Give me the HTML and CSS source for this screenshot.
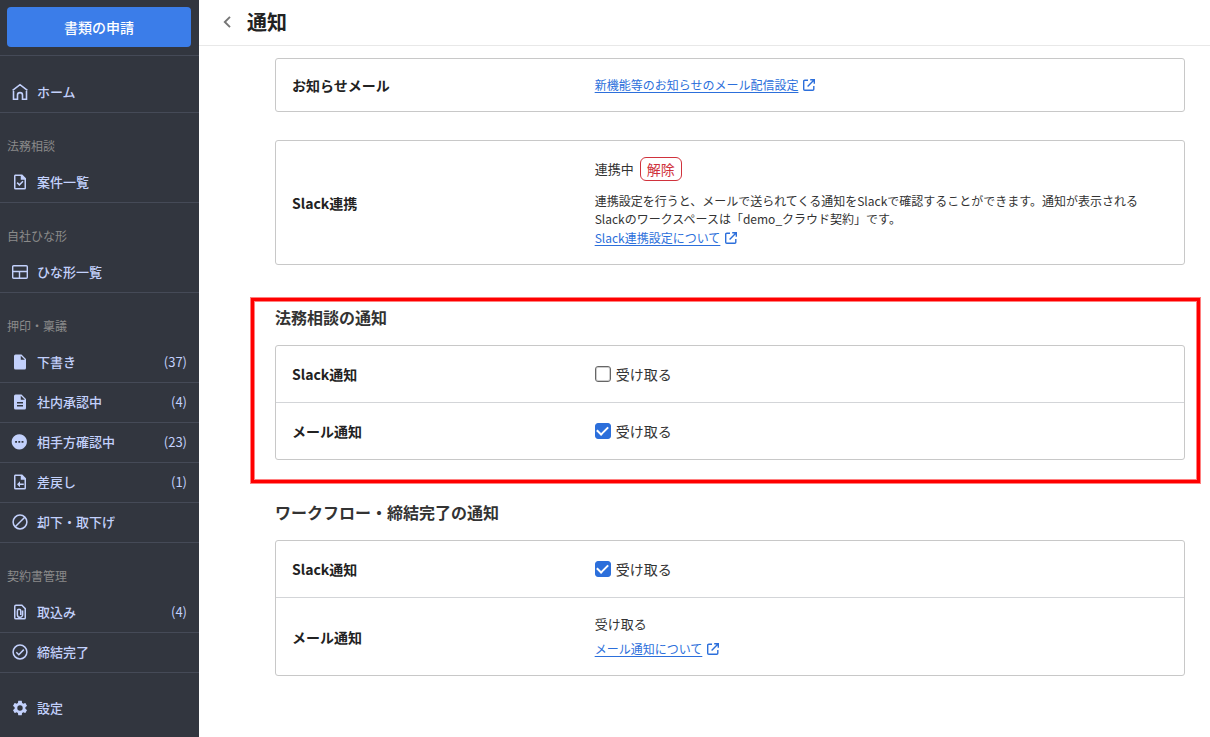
FILE: index.html
```html
<!DOCTYPE html>
<html lang="ja">
<head>
    <meta charset="UTF-8">
    <meta name="viewport" content="width=device-width, initial-scale=1.0">
    <title>通知</title>
    <link rel="stylesheet" href="styles.css">
</head>
<body>
    <svg class="sprite" aria-hidden="true">
        <symbol id="external" viewBox="0 0 12 12">
            <path d="M5 1.2H1.8Q.7 1.2.7 2.3v7.9q0 1.1 1.1 1.1h7.9q1.1 0 1.1-1.1V7M7.2.7h4.1v4.1M11 1 4.6 7.4" fill="none" stroke="currentColor" stroke-width="1.4"/>
        </symbol>
    </svg>

    <nav class="sidebar">
        <div class="sidebar-top">
            <button type="button" class="apply-button">書類の申請</button>
        </div>

        <div class="nav-group nav-home">
            <a href="#" class="nav-item">
                <svg class="nav-icon" viewBox="0 0 18 18"><path d="M1.6 7.4 9 1.7l7.4 5.7M2.5 6.8v9.4h4v-4.1a2.5 2.5 0 0 1 5 0v4.1h4V6.8" fill="none" stroke="currentColor" stroke-width="1.6"/></svg>
                <span>ホーム</span>
            </a>
        </div>

        <div class="nav-group">
            <h2 class="nav-label">法務相談</h2>
            <a href="#" class="nav-item">
                <svg class="nav-icon" viewBox="0 0 24 24"><path fill="currentColor" fill-rule="evenodd" d="M6 2h9l5 5v13a2 2 0 0 1-2 2H6a2 2 0 0 1-2-2V4c0-1.1.9-2 2-2zm0 2v16h12V9h-5V4zM7.5 13.5l1.4-1.4 2.3 2.3 4.1-4.1 1.4 1.4-5.5 5.5z"/></svg>
                <span>案件一覧</span>
            </a>
        </div>

        <div class="nav-group">
            <h2 class="nav-label">自社ひな形</h2>
            <a href="#" class="nav-item">
                <svg class="nav-icon" viewBox="0 0 18 18"><path d="M2.7 2.7h12.6q1 0 1 1v10.6q0 1-1 1H2.7q-1 0-1-1V3.7q0-1 1-1zM1.7 8.5h14.6M8.5 8.5v6.8" fill="none" stroke="currentColor" stroke-width="1.4"/></svg>
                <span>ひな形一覧</span>
            </a>
        </div>

        <div class="nav-group">
            <h2 class="nav-label">押印・稟議</h2>
            <a href="#" class="nav-item">
                <svg class="nav-icon" viewBox="0 0 24 24"><path fill="currentColor" d="M6 2a2 2 0 0 0-2 2v16a2 2 0 0 0 2 2h12a2 2 0 0 0 2-2V8l-6-6H6zm7 7V3.5L18.5 9H13z"/></svg>
                <span>下書き</span>
                <span class="nav-count">(37)</span>
            </a>
            <a href="#" class="nav-item">
                <svg class="nav-icon" viewBox="0 0 24 24"><path fill="currentColor" d="M14 2H6a2 2 0 0 0-2 2v16a2 2 0 0 0 2 2h12a2 2 0 0 0 2-2V8l-6-6zm2 16H8v-2h8v2zm0-4H8v-2h8v2zm-3-5V3.5L18.5 9H13z"/></svg>
                <span>社内承認中</span>
                <span class="nav-count">(4)</span>
            </a>
            <a href="#" class="nav-item">
                <svg class="nav-icon" viewBox="0 0 24 24"><path fill="currentColor" fill-rule="evenodd" d="M11 1.5a10.2 10.2 0 1 0 .1 0zM5.5 10.5h2.5v2.5H5.5zm4.3 0h2.5v2.5H9.8zm4.3 0h2.5v2.5h-2.5z"/></svg>
                <span>相手方確認中</span>
                <span class="nav-count">(23)</span>
            </a>
            <a href="#" class="nav-item">
                <svg class="nav-icon" viewBox="0 0 24 24"><path fill="currentColor" fill-rule="evenodd" d="M6 2h9l5 5v13a2 2 0 0 1-2 2H6a2 2 0 0 1-2-2V4c0-1.1.9-2 2-2zm0 2v16h12V9h-5V4zM8 15l4-4v3h5v2h-5v3z"/></svg>
                <span>差戻し</span>
                <span class="nav-count">(1)</span>
            </a>
            <a href="#" class="nav-item">
                <svg class="nav-icon" viewBox="0 0 18 18"><g fill="none" stroke="currentColor" stroke-width="1.5"><circle cx="9" cy="9" r="6.9"/><path d="M4.2 13.8l9.6-9.6"/></g></svg>
                <span>却下・取下げ</span>
            </a>
        </div>

        <div class="nav-group">
            <h2 class="nav-label">契約書管理</h2>
            <a href="#" class="nav-item">
                <svg class="nav-icon" viewBox="0 0 24 24"><path d="M14.5 3H6.5Q5 3 5 4.5v15Q5 21 6.5 21h11q1.5 0 1.5-1.5V7.5zM15.5 10v5.5a3.5 3.5 0 0 1-7 0V10.5a2 2 0 0 1 4.5 0v5.5" fill="none" stroke="currentColor" stroke-width="2"/></svg>
                <span>取込み</span>
                <span class="nav-count">(4)</span>
            </a>
            <a href="#" class="nav-item">
                <svg class="nav-icon" viewBox="0 0 18 18"><g fill="none" stroke="currentColor" stroke-width="1.5"><circle cx="9" cy="9" r="6.9"/><path d="M5.3 9.3l2.5 2.4 5-5.1"/></g></svg>
                <span>締結完了</span>
            </a>
        </div>

        <div class="nav-group nav-settings">
            <a href="#" class="nav-item">
                <svg class="nav-icon" viewBox="0 0 24 24"><path fill="currentColor" d="M19.14 12.94c.04-.3.06-.61.06-.94 0-.32-.02-.64-.07-.94l2.03-1.58c.18-.14.23-.41.12-.61l-1.92-3.32c-.12-.22-.37-.29-.59-.22l-2.39.96c-.5-.38-1.03-.7-1.62-.94l-.36-2.54c-.04-.24-.24-.41-.48-.41h-3.84c-.24 0-.43.17-.47.41l-.36 2.54c-.59.24-1.13.57-1.62.94l-2.39-.96c-.22-.08-.47 0-.59.22L2.74 8.87c-.12.21-.08.47.12.61l2.03 1.58c-.05.3-.09.63-.09.94s.02.64.07.94l-2.03 1.58c-.18.14-.23.41-.12.61l1.92 3.32c.12.22.37.29.59.22l2.39-.96c.5.38 1.03.7 1.62.94l.36 2.54c.05.24.24.41.48.41h3.84c.24 0 .44-.17.47-.41l.36-2.54c.59-.24 1.13-.56 1.62-.94l2.39.96c.22.08.47 0 .59-.22l1.92-3.32c.12-.22.07-.47-.12-.61l-2.01-1.58zM12 15.6A3.6 3.6 0 1 1 12 8.4a3.6 3.6 0 0 1 0 7.2z"/></svg>
                <span>設定</span>
            </a>
        </div>
    </nav>

    <div class="page">
        <header class="page-header">
            <a href="#" class="back-link" aria-label="戻る">
                <svg viewBox="0 0 8 12"><path d="M7 .8 1.8 6 7 11.2" fill="none" stroke="currentColor" stroke-width="1.9"/></svg>
            </a>
            <h1>通知</h1>
        </header>

        <main>
            <section class="card">
                <div class="row">
                    <h3 class="row-label">お知らせメール</h3>
                    <div class="row-body">
                        <div class="link-line"><a href="#">新機能等のお知らせのメール配信設定</a><svg class="external"><use href="#external"/></svg></div>
                    </div>
                </div>
            </section>

            <section class="card">
                <div class="row">
                    <h3 class="row-label">Slack連携</h3>
                    <div class="row-body">
                        <div class="status">
                            <span>連携中</span>
                            <button type="button" class="release-button">解除</button>
                        </div>
                        <p class="note">連携設定を行うと、メールで送られてくる通知をSlackで確認することができます。通知が表示されるSlackのワークスペースは「demo_クラウド契約」です。</p>
                        <div class="link-line"><a href="#">Slack連携設定について</a><svg class="external"><use href="#external"/></svg></div>
                    </div>
                </div>
            </section>

            <section class="block highlight">
                <h2>法務相談の通知</h2>
                <div class="card">
                    <div class="row">
                        <h3 class="row-label">Slack通知</h3>
                        <div class="row-body">
                            <label class="check"><input type="checkbox">受け取る</label>
                        </div>
                    </div>
                    <div class="row">
                        <h3 class="row-label">メール通知</h3>
                        <div class="row-body">
                            <label class="check"><input type="checkbox" checked>受け取る</label>
                        </div>
                    </div>
                </div>
            </section>

            <section class="block">
                <h2>ワークフロー・締結完了の通知</h2>
                <div class="card">
                    <div class="row">
                        <h3 class="row-label">Slack通知</h3>
                        <div class="row-body">
                            <label class="check"><input type="checkbox" checked>受け取る</label>
                        </div>
                    </div>
                    <div class="row">
                        <h3 class="row-label">メール通知</h3>
                        <div class="row-body">
                            <p class="receive">受け取る</p>
                            <div class="link-line"><a href="#">メール通知について</a><svg class="external"><use href="#external"/></svg></div>
                        </div>
                    </div>
                </div>
            </section>
        </main>
    </div>
</body>
</html>
```
FILE: styles.css
```css
* {
    box-sizing: border-box;
}

body {
    margin: 0;
    display: flex;
    min-height: 100vh;
    font-family: "Noto Sans CJK JP", sans-serif;
    font-size: 13px;
    line-height: 20px;
    color: #333;
    background: #fff;
}

h1, h2, h3, p {
    margin: 0;
}

button {
    font-family: inherit;
    cursor: pointer;
}

.sprite {
    display: none;
}

/* sidebar */
.sidebar {
    flex: 0 0 199px;
    background: #32363f;
}

.sidebar-top {
    padding: 7px 8px 8px 7px;
    border-bottom: 1px solid #454a57;
}

.apply-button {
    display: block;
    width: 100%;
    height: 40px;
    border: none;
    border-radius: 4px;
    background: #3b7de9;
    color: #fff;
    font-size: 14px;
    font-weight: 500;
}

.nav-home {
    padding-top: 17px;
}

.nav-label {
    padding: 24px 7px 8px;
    font-size: 12px;
    line-height: 18px;
    font-weight: 400;
    color: #8a8a8a;
}

.nav-item {
    display: flex;
    align-items: center;
    gap: 8px;
    height: 40px;
    padding: 0 12px 2px 11px;
    border-bottom: 1px solid #454a57;
    color: #c3d1fc;
    font-weight: 500;
    text-decoration: none;
}

.nav-item:hover {
    background: #3b404b;
}

.nav-icon {
    width: 18px;
    height: 18px;
    flex: none;
}

.nav-count {
    margin-left: auto;
    font-weight: 400;
}

.nav-settings {
    padding-top: 16px;
}

.nav-settings .nav-item {
    border-bottom: none;
}

/* page */
.page {
    flex: 1;
    min-width: 0;
}

.page-header {
    display: flex;
    align-items: center;
    gap: 16px;
    height: 46px;
    padding: 0 24px 2px;
    border-bottom: 1px solid #e8e8e8;
}

.page-header h1 {
    font-size: 20px;
    line-height: 28px;
    color: #222;
}

.back-link {
    display: flex;
    color: #757575;
}

.back-link svg {
    width: 8px;
    height: 12px;
}

main {
    padding: 12px 25px 32px 76px;
}

.card {
    border: 1px solid #c8c8c8;
    border-radius: 3px;
}

.card + .card {
    margin-top: 28px;
}

.row {
    display: grid;
    grid-template-columns: 1fr 2fr;
    align-items: center;
}

.row + .row {
    border-top: 1px solid #d3d5d8;
}

.row-label {
    padding: 0 16px;
    font-size: 14px;
    font-weight: 700;
    color: #222;
}

.row-body {
    padding: 16px;
}

.link-line {
    display: flex;
    align-items: center;
    gap: 5px;
    font-size: 12px;
}

.link-line a {
    color: #2c6fdb;
    text-underline-offset: 2px;
}

.external {
    width: 12px;
    height: 12px;
    color: #2c6fdb;
}

.status {
    display: flex;
    align-items: center;
    gap: 6px;
    margin-bottom: 11px;
}

.release-button {
    height: 24px;
    padding: 0 6px;
    border: 1px solid #d0323c;
    border-radius: 6px;
    background: #fff;
    color: #d0323c;
    font-size: 14px;
    line-height: 20px;
}

.note {
    font-size: 12px;
    line-height: 18px;
}

.receive {
    margin-bottom: 5px;
}

.block {
    margin-top: 40px;
}

.block h2 {
    margin-bottom: 16px;
    font-size: 16px;
    line-height: 24px;
}

/* red frame around the section */
.highlight {
    position: relative;
}

.highlight::after {
    content: "";
    position: absolute;
    top: -7px;
    right: -15px;
    bottom: -23px;
    left: -24px;
    border: 3px solid #f00;
    box-shadow: 0 0 0 1px #ff8080, inset 0 0 0 1px #ff8080;
    pointer-events: none;
}

/* checkbox */
.check {
    display: flex;
    align-items: center;
    gap: 5px;
    font-size: 14px;
    line-height: 24px;
    cursor: pointer;
}

.check input {
    appearance: none;
    display: flex;
    align-items: center;
    justify-content: center;
    width: 16px;
    height: 16px;
    margin: 0;
    border: 1px solid #666;
    border-radius: 3px;
    background: #fff;
    box-shadow: inset 0 0 0 1px #ccc;
}

.check input:checked {
    border-color: #2c6fdb;
    background: #2c6fdb;
    box-shadow: none;
}

.check input:checked::before {
    content: "";
    width: 9px;
    height: 5px;
    margin-bottom: 3px;
    border: solid #fff;
    border-width: 0 0 2px 2px;
    transform: rotate(-45deg);
}
```
